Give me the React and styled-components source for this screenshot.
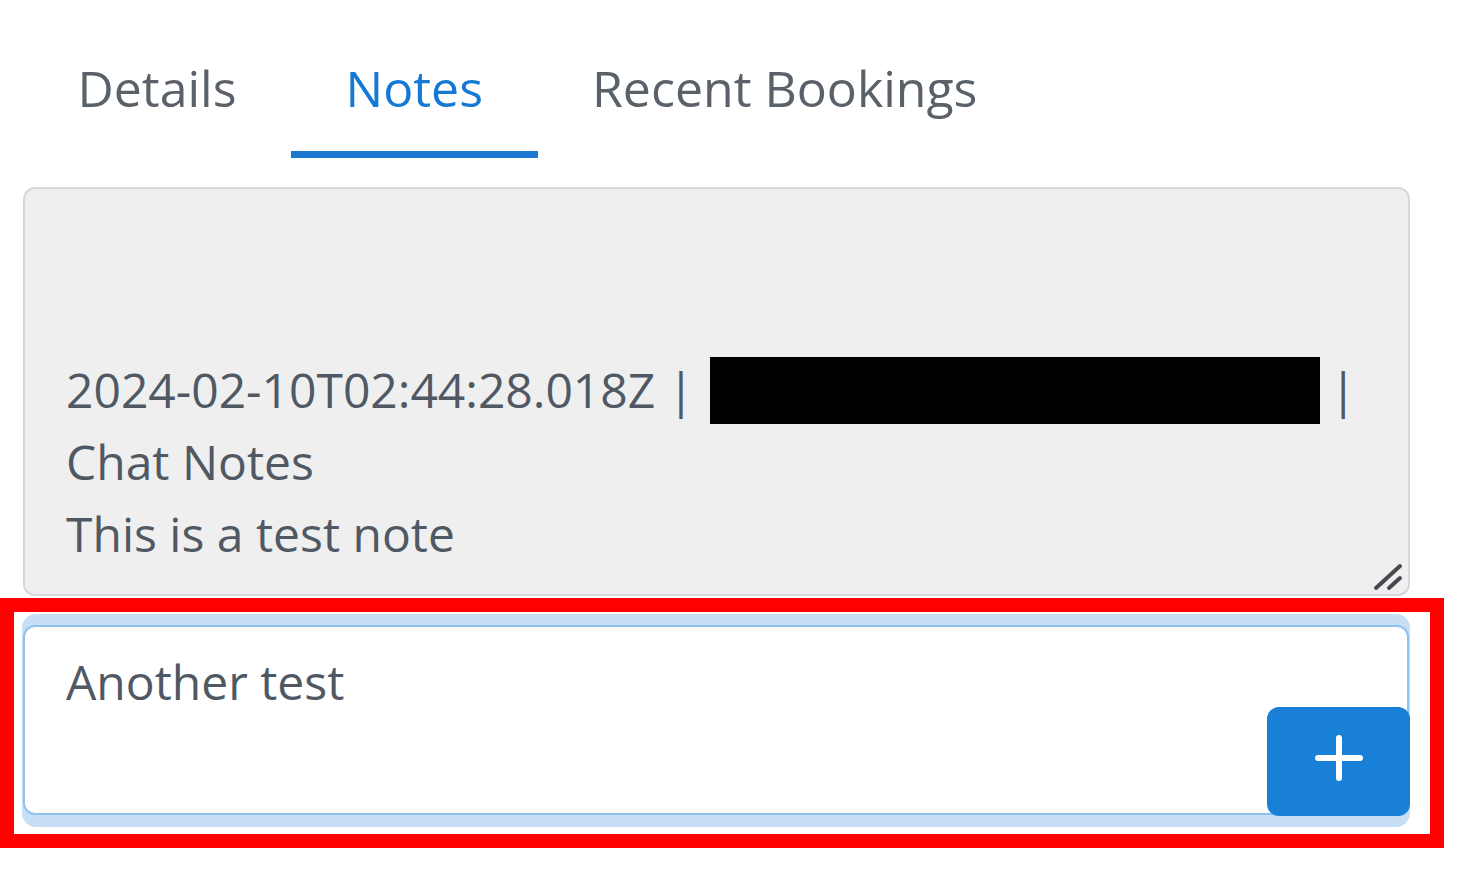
import styled, { createGlobalStyle } from "styled-components";

const GlobalStyle = createGlobalStyle`
  html, body {
    margin: 0;
    padding: 0;
    background: #fff;
  }
  body {
    font-family: "Open Sans", "Noto Sans", sans-serif;
  }
`;

const Page = styled.div`
  width: 1468px;
  height: 869px;
  padding-top: 28px;
  box-sizing: border-box;
  overflow: hidden;
`;

const TabBar = styled.nav`
  display: flex;
  margin-left: 23px;
`;

const Tab = styled.a`
  display: block;
  padding: 24px 54.5px 27px;
  font-size: 50px;
  line-height: 72px;
  color: ${({ $active }) => ($active ? "#1479d4" : "#5a6169")};
  border-bottom: 7px solid ${({ $active }) => ($active ? "#1a78d3" : "transparent")};
  text-decoration: none;
  cursor: pointer;
`;

const NotesBox = styled.div`
  position: relative;
  box-sizing: border-box;
  width: 1387px;
  height: 409px;
  margin: 29px 0 0 23px;
  padding: 0 30px 24px 41px;
  display: flex;
  flex-direction: column;
  justify-content: flex-end;
  background: #efefef;
  border: 2px solid #d3d9df;
  border-radius: 12px;
  color: #505963;
  font-size: 48px;
  line-height: 72px;
`;

const Line = styled.div`
  white-space: nowrap;
`;

const Redacted = styled.span`
  display: inline-block;
  width: 610px;
  height: 67px;
  margin: 0 10px 0 16px;
  background: #000;
  vertical-align: -16px;
`;

const Grip = styled.svg`
  position: absolute;
  right: 4px;
  bottom: 3px;
`;

const Frame = styled.div`
  box-sizing: border-box;
  width: 1444px;
  margin-top: 2px;
  padding: 2px 20px 7px 8px;
  border: 14px solid #ff0000;
`;

const FocusRing = styled.div`
  display: grid;
  padding: 11px 1px 12px;
  background: #c7dff4;
  border-radius: 14px;
`;

const Input = styled.div`
  grid-area: 1 / 1;
  box-sizing: border-box;
  height: 190px;
  padding: 19px 40px 0 41px;
  background: #fff;
  border: 2px solid #8ec2ef;
  border-radius: 12px;
  color: #505963;
  font-size: 48px;
  line-height: 72px;
`;

const AddButton = styled.button`
  grid-area: 1 / 1;
  justify-self: end;
  align-self: end;
  width: 143px;
  height: 109px;
  margin: 0 -1px -1px 0;
  padding: 0 0 8px;
  display: flex;
  align-items: center;
  justify-content: center;
  border: none;
  border-radius: 12px;
  background: #1980d7;
  cursor: pointer;
`;

const App = () => {
  return (
    <Page>
      <GlobalStyle />
      <TabBar>
        <Tab>Details</Tab>
        <Tab $active>Notes</Tab>
        <Tab>Recent Bookings</Tab>
      </TabBar>
      <NotesBox>
        <Line>
          2024-02-10T02:44:28.018Z |<Redacted />|
        </Line>
        <Line>Chat Notes</Line>
        <Line>This is a test note</Line>
        <Grip width="32" height="30" viewBox="0 0 32 30">
          <line x1="4" y1="27" x2="28" y2="5" stroke="#454a50" strokeWidth="4" strokeLinecap="round" />
          <line x1="17" y1="27" x2="28" y2="17" stroke="#454a50" strokeWidth="4" strokeLinecap="round" />
        </Grip>
      </NotesBox>
      <Frame>
        <FocusRing>
          <Input>Another test</Input>
          <AddButton aria-label="Add note">
            <svg width="50" height="50" viewBox="0 0 50 50">
              <line x1="25" y1="5" x2="25" y2="45" stroke="#fff" strokeWidth="6" strokeLinecap="round" />
              <line x1="4" y1="25" x2="46" y2="25" stroke="#fff" strokeWidth="6" strokeLinecap="round" />
            </svg>
          </AddButton>
        </FocusRing>
      </Frame>
    </Page>
  );
};

export default App;
